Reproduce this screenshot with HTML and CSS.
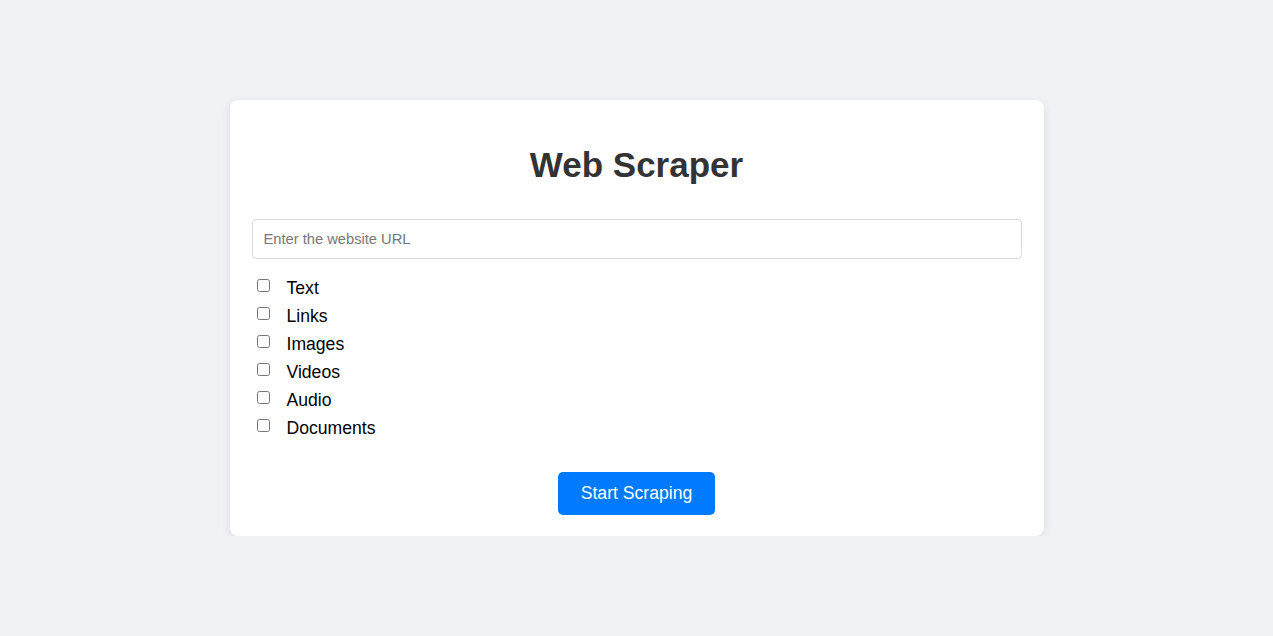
FILE: index.html
```html
<!DOCTYPE html>
<html lang="en">
<head>
<meta charset="utf-8">
<title>Web Scraper</title>
<link rel="stylesheet" href="styles.css">
</head>
<body>
<div class="page">
  <div class="card">
    <h1 class="title">Web Scraper</h1>
    <input class="url" type="text" placeholder="Enter the website URL">
    <div class="options">
      <label class="option"><input type="checkbox" class="check"><span class="label">Text</span></label>
      <label class="option"><input type="checkbox" class="check"><span class="label">Links</span></label>
      <label class="option"><input type="checkbox" class="check"><span class="label">Images</span></label>
      <label class="option"><input type="checkbox" class="check"><span class="label">Videos</span></label>
      <label class="option"><input type="checkbox" class="check"><span class="label">Audio</span></label>
      <label class="option"><input type="checkbox" class="check"><span class="label">Documents</span></label>
    </div>
    <div class="actions">
      <button class="start" type="button">Start Scraping</button>
    </div>
  </div>
</div>
</body>
</html>
```
FILE: styles.css
```css
* { box-sizing: border-box; }
html, body {
  margin: 0;
  padding: 0;
  background: #f0f2f5;
  font-family: "Liberation Sans", Arial, sans-serif;
}
.page {
  display: flex;
  justify-content: center;
  padding-top: 100px;
}
.card {
  width: 814px;
  background: #fff;
  border-radius: 8px;
  box-shadow: 0 3px 10px rgba(0, 0, 0, 0.1);
  padding: 22px 22px 21px;
}
.title {
  margin: 23px 0 34px;
  font-size: 35px;
  line-height: 40px;
  font-weight: bold;
  color: #333;
  text-align: center;
}
.url {
  display: block;
  width: 100%;
  height: 40px;
  border: 1px solid #dcdcdc;
  border-radius: 4px;
  padding: 0 11px;
  font-family: inherit;
  font-size: 14.7px;
  color: #333;
  outline: none;
}
.url::placeholder { color: #777; }
.options {
  display: flex;
  flex-direction: column;
  margin-top: 14px;
}
.option {
  display: flex;
  align-items: center;
  height: 28px;
}
.check {
  width: 13px;
  height: 13px;
  margin: 0 0 4px 5px;
}
.label {
  margin-left: 17px;
  padding-top: 2px;
  font-size: 17.6px;
  color: #000;
}
.actions {
  display: flex;
  justify-content: center;
  margin-top: 31px;
}
.start {
  height: 43px;
  padding: 0 22.5px;
  border: none;
  border-radius: 5px;
  background: #007bff;
  color: #fff;
  font-family: inherit;
  font-size: 17.6px;
  cursor: pointer;
}
```
